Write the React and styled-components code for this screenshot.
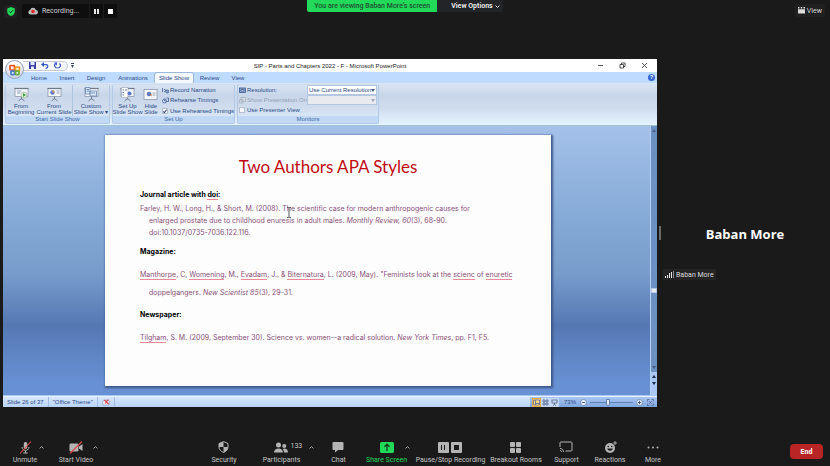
import React from "react";
import styled, { createGlobalStyle, css } from "styled-components";

const UI = `Roboto, "Noto Sans", sans-serif`;

const GlobalStyle = createGlobalStyle`
  *, *::before, *::after { box-sizing: border-box; }
  body { margin: 0; background: #1a1a1a; font-family: ${UI}; }
  button, input, select { font: inherit; color: inherit; margin: 0; }
  button { padding: 0; border: 0; background: none; white-space: nowrap; cursor: pointer; }
  svg { display: block; flex: none; }
  h1, h2, p { margin: 0; }
`;

/* ---------- Meeting shell ---------- */

const Shell = styled.div`
  display: flex;
  flex-direction: column;
  min-height: 100vh;
  color: #d6d6d6;
`;

const TopBar = styled.header`
  display: grid;
  grid-template-columns: 1fr auto 1fr;
  align-items: start;
  height: 59px;
  font-size: 7px;
`;

const RecordingArea = styled.div`
  display: flex;
  align-items: center;
  gap: 5px;
  padding: 4px 0 0 4px;
`;

const ShieldButton = styled.button`
  display: grid;
  place-items: center;
  width: 13px;
  height: 13px;
  border-radius: 3px;
  background: #222;
`;

const RecordingPill = styled.div`
  display: flex;
  align-items: center;
  height: 14px;
  padding-left: 6px;
  border-radius: 2px;
  background: #0e0e0e;
  color: #d0d0d0;
`;

const RecordingLabel = styled.span`
  width: 51px;
  padding-left: 4px;
`;

const PillButton = styled.button`
  display: grid;
  place-items: center;
  width: 14px;
  height: 14px;
  border-left: 1px solid #1c1c1c;
`;

const SharingBanner = styled.div`
  display: flex;
  height: 12px;
  margin-right: 20px;
  line-height: 12px;
  font-size: 7px;
  border-radius: 0 0 2px 2px;
  overflow: hidden;
`;

const SharingText = styled.span`
  padding: 0 7px;
  background: #23d959;
  color: #1d5231;
  font-weight: 500;
  white-space: nowrap;
`;

const ViewOptions = styled.button`
  display: flex;
  align-items: center;
  gap: 2px;
  padding: 0 3px 0 14px;
  background: #222427;
  color: #f2f2f2;
  font-weight: 600;
`;

const ViewButton = styled.button`
  display: flex;
  align-items: center;
  justify-self: end;
  gap: 2px;
  height: 13px;
  margin: 4px 5px 0 0;
  padding: 0 3px;
  border-radius: 3px;
  background: #202020;
`;

const Stage = styled.main`
  flex: 1;
  display: grid;
  grid-template-columns: minmax(0, 1fr) 173px;
  padding-left: 3px;
`;

const ParticipantPanel = styled.aside`
  position: relative;
  display: flex;
  flex-direction: column;
  justify-content: center;
  align-items: center;
  padding-top: 38px;
`;

const PanelName = styled.h2`
  color: #fff;
  font-family: "Open Sans", sans-serif;
  font-size: 13px;
  line-height: 20px;
  font-weight: 700;
  padding-left: 3px;
`;

const PanelTag = styled.div`
  display: flex;
  align-items: center;
  align-self: flex-start;
  gap: 2px;
  height: 11px;
  margin: 25px 0 0 6px;
  padding: 0 2px;
  background: #242424;
  color: #dcdcdc;
  font-size: 7px;
`;

const ResizeHandle = styled.div`
  position: absolute;
  left: 2px;
  top: 167px;
  width: 2px;
  height: 14px;
  background: #6c6c6c;
`;

/* ---------- Meeting toolbar ---------- */

const Toolbar = styled.footer`
  display: flex;
  justify-content: space-between;
  align-items: flex-end;
  height: 59px;
  font-size: 7px;
  line-height: 10px;
`;

const ToolSet = styled.div`
  display: flex;
  padding-left: ${(p) => p.$inset || 0}px;
`;

const ToolCell = styled.div`
  position: relative;
  display: flex;
  justify-content: center;
  width: ${(p) => p.$w}px;
  height: 27px;
`;

const ToolButton = styled.button`
  display: flex;
  flex-direction: column;
  align-items: center;
  color: ${(p) => (p.$accent ? "#23d959" : "#c4c4c4")};
`;

const ToolIcon = styled.span`
  display: flex;
  align-items: center;
  gap: 2px;
  height: 16px;
  color: #b4b4b4;
`;

const ToolCount = styled.span`
  position: absolute;
  left: calc(50% + 9px);
  top: 2px;
  color: #c4c4c4;
`;

const CaretButton = styled.button`
  position: absolute;
  right: 4px;
  top: 4px;
  width: 8px;
  height: 8px;
  display: grid;
  place-items: center;
  color: #b4b4b4;
`;

const EndArea = styled.div`
  display: flex;
  justify-content: flex-end;
  width: 56px;
  padding: 0 7px 7px 0;
`;

const EndButton = styled.button`
  width: 33px;
  height: 15px;
  border-radius: 4px;
  background: #b92525;
  color: #fff;
  font-weight: 700;
`;

/* ---------- Presentation window ---------- */

const Window = styled.section`
  position: relative;
  display: flex;
  flex-direction: column;
  min-width: 0;
  color: #2b4a86;
  background: #bfdbff;
  font-family: "Liberation Sans", Arial, sans-serif;
  font-size: 6px;
  line-height: 8px;
`;

const TitleBar = styled.div`
  display: grid;
  grid-template-columns: 1fr auto 1fr;
  align-items: center;
  height: 13px;
  background: #fff;
  color: #222;
`;

const QuickAccess = styled.div`
  display: flex;
  align-items: center;
  gap: 3px;
  padding-left: 20px;
`;

const QuickPill = styled.div`
  display: flex;
  align-items: center;
  gap: 5px;
  height: 10px;
  width: 45px;
  padding-left: 6px;
  border: 1px solid #c3c9d8;
  border-left: 0;
  border-radius: 0 5px 5px 0;
  background: #f5f8fd;
`;

const WindowControls = styled.div`
  display: flex;
  justify-content: flex-end;
  gap: 15px;
  padding-right: 9px;
  color: #222;
`;

const OfficeButton = styled.button`
  position: absolute;
  left: 2px;
  top: 1px;
  width: 19px;
  height: 19px;
  display: grid;
  place-items: center;
  border-radius: 50%;
  border: 1px solid #93a0b8;
  background: radial-gradient(circle at 50% 30%, #fff 0 30%, #cdd5e4 75%, #eef3fb);
`;

const TabStrip = styled.nav`
  display: flex;
  align-items: flex-end;
  height: 11px;
  padding-left: 22px;
  background: #bfdbff;
`;

const Tab = styled.button`
  width: ${(p) => p.$w}px;
  height: 10px;
  border-radius: 2px 2px 0 0;
  ${(p) =>
    p.$active &&
    css`
      background: #f3f8ff;
      box-shadow: 0 0 0 1px #9db8de;
      clip-path: inset(-1px -1px 0 -1px);
    `}
`;

const HelpIcon = styled.button`
  margin: 0 2px 2px auto;
  width: 7px;
  height: 7px;
  border-radius: 50%;
  background: #3566cf;
  color: #fff;
  font-size: 6px;
  line-height: 7px;
  font-weight: 700;
`;

const Ribbon = styled.div`
  display: flex;
  gap: 2px;
  height: 43px;
  padding: 1px 2px;
  border-bottom: 1px solid #9fc4cf;
  background: linear-gradient(#dbe6f4 0, #c8d6ea 28%, #cfdcee 60%, #e5f3fe 100%);
`;

const Group = styled.div`
  display: flex;
  flex-direction: column;
  width: ${(p) => p.$w}px;
  border: 1px solid #b3cae6;
  border-top-color: #cfdcec;
  border-radius: 2px;
`;

const GroupBody = styled.div`
  flex: 1;
  display: flex;
`;

const GroupLabel = styled.div`
  height: 7px;
  line-height: 7px;
  text-align: center;
  background: #c1d9f4;
  color: #3e6aaa;
`;

const BigButton = styled.button`
  display: flex;
  flex-direction: column;
  align-items: center;
  width: ${(p) => p.$w}px;
  line-height: 6px;
  padding-top: 2px;
  ${(p) => p.$divided && css`border-left: 1px solid #b0c3de;`}
`;

const BigLabel = styled.span`
  margin-top: 1px;
`;

const OptionColumn = styled.div`
  display: flex;
  flex-direction: column;
  justify-content: space-around;
  padding-left: 2px;
`;

const Option = styled.button`
  display: flex;
  align-items: center;
  gap: 1px;
  height: 8px;
`;

const CheckOption = styled.label`
  display: flex;
  align-items: center;
  gap: 2px;
  height: 8px;
  white-space: nowrap;
`;

const Check = styled.input`
  appearance: none;
  width: 6px;
  height: 6px;
  border: 1px solid #b5bfce;
  background: #f6f6f6;
  display: grid;
  place-items: center;
  &:checked::after {
    content: "";
    width: 2px;
    height: 4px;
    border: solid #33467a;
    border-width: 0 1px 1px 0;
    transform: rotate(40deg);
  }
`;

const MonitorForm = styled.div`
  flex: 1;
  display: grid;
  grid-template-columns: 68px 70px;
  grid-auto-rows: 10px;
  align-items: center;
  padding-left: 1px;
`;

const FieldLabel = styled.label`
  display: flex;
  align-items: center;
  gap: 1px;
  white-space: nowrap;
  color: ${(p) => (p.$dim ? "#93a1b8" : "inherit")};
`;

const SelectWrap = styled.div`
  position: relative;
  svg { position: absolute; right: 2px; top: 4px; pointer-events: none; }
`;

const Select = styled.select`
  appearance: none;
  display: block;
  width: 100%;
  height: 10px;
  padding: 0 1px;
  border: 1px solid #b3c7e1;
  border-radius: 0;
  background: ${(p) => (p.disabled ? "#e9eaf0" : "#fdfeff")};
  opacity: 1;
`;

const Workspace = styled.div`
  flex: 1;
  display: flex;
  padding-left: 2px;
  background: linear-gradient(#a5c1ea, #8fb2dd 22%, #779ccb 55%, #5578b3 74%, #6891d3 96%);
  border-bottom: 1px solid #a9c8f3;
`;

const Canvas = styled.div`
  flex: 1;
  display: flex;
  padding: 9px 99px 9px 100px;
`;

const Slide = styled.article`
  position: relative;
  flex: 1;
  padding: 20px 0 0 35px;
  background: #fdfdfe;
  box-shadow: 1px 1px 2px 1px #3d5787;
  color: #8b5078;
  font-family: Inter, "Liberation Sans", sans-serif;
  font-size: 7px;
  line-height: 12px;
  white-space: nowrap;
`;

const SlideTitle = styled.h1`
  margin-right: 35px;
  padding-bottom: 10px;
  color: #c00b12;
  font-family: Lato, sans-serif;
  font-size: 17px;
  line-height: 24px;
  font-weight: 400;
  text-align: center;
`;

const Heading = styled.h2`
  color: #000;
  font-size: 7px;
  line-height: 12px;
  font-weight: 700;
`;

const Citation = styled.p`
  padding-left: 9px;
  text-indent: -9px;
  line-height: ${(p) => (p.$loose ? 18 : 12)}px;
  margin: ${(p) => (p.$loose ? "8px 0 7px" : "2px 0 7px")};
`;

const Misspelt = styled.span`
  border-bottom: 1px solid #ea8799;
`;

const Pointer = styled.svg`
  position: absolute;
  left: 181px;
  top: 72px;
`;

const ScrollTrack = styled.div`
  display: flex;
  flex-direction: column;
  align-items: center;
  width: 7px;
  border-left: 1px solid #b5d0f6;
  background: #6d90c2;
`;

const ScrollThumb = styled.div`
  width: 6px;
  height: 5px;
  margin: 153px 0 auto;
  background: #e6edf7;
  border: 1px solid #b6c6de;
`;

const ScrollEnd = styled.div`
  display: flex;
  flex-direction: column;
  align-items: center;
  gap: 4px;
  width: 6px;
  padding: ${(p) => (p.$pages ? "3px 0 10px" : "3px 0")};
  background: ${(p) => (p.$pages ? "#a9c7f2" : "none")};
`;

const StatusBar = styled.div`
  display: flex;
  align-items: stretch;
  height: 11px;
  line-height: 10px;
  border-top: 1px solid #e8f2ff;
  background: linear-gradient(#d8e7fc, #b9d3f8);
`;

const StatusItem = styled.span`
  display: flex;
  align-items: center;
  padding: 0 4px;
  border-right: 1px solid #9fbbe2;
`;

const ZoomArea = styled.div`
  display: flex;
  align-items: center;
  gap: 3px;
  width: 127px;
  margin-left: auto;
  padding: 0 3px 0 2px;
  background: linear-gradient(#a9c6f2, #7ea6e0);
`;

const ViewMode = styled.button`
  display: grid;
  place-items: center;
  width: 9px;
  height: 9px;
  margin-right: -3px;
  background: ${(p) => (p.$on ? "#ffd987" : "#c5d8f4")};
  border: 1px solid ${(p) => (p.$on ? "#e3a94a" : "#c5d8f4")};
`;

const ZoomValue = styled.span`
  margin: 0 1px 0 5px;
`;

const ZoomSlider = styled.input`
  appearance: none;
  flex: 1;
  min-width: 0;
  height: 8px;
  background: linear-gradient(#5f7fb4, #5f7fb4) center / 100% 1px no-repeat;
  &::-webkit-slider-thumb {
    appearance: none;
    width: 4px;
    height: 7px;
    border: 1px solid #5f7fb4;
    border-radius: 0 0 2px 2px;
    background: #e8f0fb;
  }
`;

const FitButton = styled.button`
  margin-left: 1px;
`;

/* ---------- Icons ---------- */

const Caret = ({ down, color = "currentColor", size = 5 }) => (
  <svg width={size} height={size} viewBox="0 0 8 8" fill="none" stroke={color} strokeWidth="1.5">
    <path d={down ? "M1 2.5 4 5.5 7 2.5" : "M1 5.5 4 2.5 7 5.5"} />
  </svg>
);

const Triangle = ({ up, color = "#4a5f88" }) => (
  <svg width="4" height="3" viewBox="0 0 4 3"><path fill={color} d={up ? "M0 3h4L2 0z" : "M0 0h4L2 3z"} /></svg>
);

const CustomizeMark = () => (
  <svg width="3" height="5" viewBox="0 0 3 5" fill="#3a4560"><path d="M0 0h3v1H0zM0 2h3L1.500 5z" /></svg>
);

const ShieldCheck = () => (
  <svg width="8" height="9" viewBox="0 0 16 18">
    <path fill="#23d959" d="M8 0 15.500 3v6c0 4.500-3 7.500-7.500 9C3.500 16.500.5 13.500.5 9V3z" />
    <path d="m4.500 8.800 2.700 2.700 4.600-5" fill="none" stroke="#1a1a1a" strokeWidth="1.800" />
  </svg>
);

const CloudRecord = () => (
  <svg width="10" height="8" viewBox="0 0 20 16">
    <path fill="#b9b9b9" d="M5 15a4.500 4.500 0 0 1-.8-8.900A6 6 0 0 1 15.800 6 4.500 4.500 0 0 1 15 15z" />
    <circle cx="10" cy="9" r="3.600" fill="#e02828" />
  </svg>
);

const Pause = () => (
  <svg width="5" height="5" viewBox="0 0 5 5" fill="#e8e8e8"><path d="M0 0h2v5H0zM3 0h2v5H3z" /></svg>
);
const Stop = () => <svg width="5" height="5"><path fill="#fff" d="M0 0h5v5H0z" /></svg>;

const GridIcon = () => (
  <svg width="7" height="7" viewBox="0 0 14 14" fill="#ddd">
    <path d="M0 0h3v3H0zM5.500 0h3v3h-3zM11 0h3v3h-3zM0 4.500h14V13H0z" />
  </svg>
);

const Signal = () => (
  <svg width="9" height="7" viewBox="0 0 9 7" fill="#e8e8e8">
    <path d="M0 5h1v2H0zM2 4h1v3H2zM4 2h1v5H4zM6 1h1v6H6z" /><path fill="#8a8a8a" d="M8 0h1v7H8z" />
  </svg>
);

const MicOff = () => (
  <svg width="13" height="13" viewBox="0 0 26 26" fill="none" stroke="currentColor" strokeWidth="2">
    <rect x="9.500" y="2" width="7" height="14" rx="3.500" fill="currentColor" stroke="none" />
    <path d="M6 12c0 9 14 9 14 0M13 19v5M8.500 24h9" />
    <path d="M2 25 24 1" stroke="#e04a4a" strokeWidth="2.200" />
  </svg>
);

const VideoOff = () => (
  <svg width="14" height="13" viewBox="0 0 28 26">
    <rect x="1" y="5" width="18" height="16" rx="2.500" fill="currentColor" />
    <path fill="currentColor" d="m20 11 7-5v14l-7-5z" />
    <path d="M2 25 26 1" stroke="#e04a4a" strokeWidth="2.200" />
  </svg>
);

const Security = () => (
  <svg width="11" height="12" viewBox="0 0 22 24">
    <path d="M11 1.200 20 5v7c0 5-3.500 8.800-9 11-5.500-2.200-9-6-9-11V5z" fill="#1a1a1a" stroke="currentColor" strokeWidth="2" />
    <path fill="currentColor" d="M11 1.200V12H2V5zM11 12h9c0 5-3.500 8.800-9 11z" />
  </svg>
);

const People = () => (
  <svg width="14" height="11" viewBox="0 0 28 22" fill="currentColor">
    <circle cx="9" cy="6" r="5" /><path d="M0 21c0-11 18-11 18 0z" />
    <circle cx="20.500" cy="8" r="4" /><path d="M20 21c0-3-1-5.300-2.600-6.700C21.500 11.500 28 13.500 28 21z" />
  </svg>
);

const Chat = () => (
  <svg width="12" height="12" viewBox="0 0 24 24" fill="currentColor">
    <path d="M3 2h18a2 2 0 0 1 2 2v12a2 2 0 0 1-2 2h-9l-6 5v-5H3a2 2 0 0 1-2-2V4a2 2 0 0 1 2-2z" />
  </svg>
);

const Share = () => (
  <svg width="14" height="11" viewBox="0 0 28 22">
    <rect width="28" height="22" rx="3" fill="#23d959" />
    <path d="M14 18V5M9 9.500 14 4.500l5 5" fill="none" stroke="#12401f" strokeWidth="2.600" />
  </svg>
);

const PauseSquare = () => (
  <svg width="11" height="11" viewBox="0 0 11 11"><rect width="11" height="11" rx="1" fill="currentColor" /><path fill="#1a1a1a" d="M3 3h1v5H3zM6 3h1v5H6z" /></svg>
);
const StopSquare = () => (
  <svg width="11" height="11" viewBox="0 0 11 11"><rect width="11" height="11" rx="1" fill="currentColor" /><path fill="#1a1a1a" d="M3 3h5v5H3z" /></svg>
);
const Rooms = () => (
  <svg width="11" height="11" viewBox="0 0 11 11" fill="currentColor">
    <rect width="5" height="5" rx="1" /><rect x="6" width="5" height="5" rx="1" /><rect y="6" width="5" height="5" rx="1" /><rect x="6" y="6" width="5" height="5" rx="1" />
  </svg>
);
const Cast = () => (
  <svg width="14" height="12" viewBox="0 0 28 24" fill="none" stroke="currentColor" strokeWidth="2">
    <path d="M2 12V4a2 2 0 0 1 2-2h20a2 2 0 0 1 2 2v14a2 2 0 0 1-2 2H13M2 15c4 0 7 3 7 7M2 19c2 0 3 1 3 3" />
  </svg>
);
const Smile = () => (
  <svg width="13" height="13" viewBox="0 0 26 26">
    <circle cx="12" cy="14" r="10" fill="currentColor" />
    <circle cx="8.500" cy="11" r="1.500" fill="#1a1a1a" /><circle cx="15.500" cy="11" r="1.500" fill="#1a1a1a" />
    <path d="M6.500 15h11c-1 6-10 6-11 0z" fill="#1a1a1a" />
    <path d="M22 0v8M18 4h8" stroke="#1a1a1a" strokeWidth="4" /><path d="M22 0v8M18 4h8" stroke="currentColor" strokeWidth="1.800" />
  </svg>
);
const Dots = () => (
  <svg width="12" height="3" viewBox="0 0 12 3" fill="currentColor"><circle cx="1.500" cy="1.500" r="1" /><circle cx="6" cy="1.500" r="1" /><circle cx="10.500" cy="1.500" r="1" /></svg>
);

const Screen = ({ kind }) => (
  <svg width="15" height="15" viewBox="0 0 30 30">
    {kind !== "hide" && <path d="M15 18v7M9 28l6-5 6 5" fill="none" stroke="#75808f" strokeWidth="2" />}
    <rect x="2" y={kind === "hide" ? 5 : 3} width="26" height={kind === "hide" ? 20 : 16} fill="#f3f6fa" stroke="#8994a5" strokeWidth="1.500" />
    {kind !== "hide" && <path d="M1 3h28" stroke="#6e7a8c" strokeWidth="2.500" />}
    {kind === "play" && <><path d="M6 8h9M6 12h7" stroke="#8fa3c4" strokeWidth="2" /><circle cx="20" cy="16" r="6" fill="#e3f3df" stroke="#7b9b7b" /><path d="m18 12 6 4-6 4z" fill="#3d9a3d" /></>}
    {kind === "current" && <><circle cx="11" cy="11" r="4.500" fill="#5a78c8" /><path d="M11 11V6.500a4.500 4.500 0 0 1 4.500 4.500z" fill="#e8a24a" /><path d="M19 8h6M19 12h6" stroke="#8fa3c4" strokeWidth="2" /></>}
    {kind === "custom" && <><path d="M3 1h9v13H3zM12 8h13v10H12z" fill="#dce8f8" stroke="#5f7eac" strokeWidth="1.500" /><path d="M5 5h5M5 8h5M14 12h8" stroke="#4a75b8" strokeWidth="1.500" /></>}
    {kind === "setup" && <><path d="M3 1h13v20H3z" fill="#fff" stroke="#8c96a6" /><path d="M5 6h3M5 11h3M5 16h3M10 6h4" stroke="#5b7cb5" strokeWidth="2" /><circle cx="19" cy="13" r="4" fill="#5a78c8" /></>}
    {kind === "hide" && <><circle cx="12" cy="14" r="4.500" fill="#5a78c8" /><path d="M12 14h5v5z" fill="#d96a4a" /><path d="M19 12h6M19 16h6" stroke="#98a7bd" strokeWidth="2" /></>}
  </svg>
);

const Mini = ({ kind }) => (
  <svg width="7" height="7" viewBox="0 0 14 14" fill="none" stroke="#3d5a96" strokeWidth="1.600">
    {kind === "narrate" && <><path d="M1 2v8M4 4l4 3-4 3" /><circle cx="10.500" cy="9" r="3" fill="#8da6d0" /></>}
    {kind === "clock" && <><circle cx="5" cy="8" r="4" fill="#dfe9f8" /><path d="M5 5v3h3M9 2h4v7H9" /></>}
    {kind === "monitor" && <><rect x="1" y="2" width="12" height="9" fill="#8fa5c7" /><path d="M4 5h6v3H4z" fill="#fff" /></>}
    {kind === "show" && <g stroke="#a3aec0"><path d="M4 1h9v8H4zM1 5h7v7H1z" fill="#d7dde8" /></g>}
  </svg>
);

const Save = () => (
  <svg width="7" height="7" viewBox="0 0 14 14"><path fill="#3a3fa8" d="M0 0h14v14H0z" /><path fill="#e6ebff" d="M3 0h8v6H3zM4 9h6v5H4z" /></svg>
);
const Undo = () => (
  <svg width="8" height="7" viewBox="0 0 16 14"><path d="M4 5h6c5 0 5 7-1 8" fill="none" stroke="#3454c4" strokeWidth="2.500" /><path fill="#3454c4" d="M0 5 6 0v10z" /></svg>
);
const Redo = () => (
  <svg width="7" height="7" viewBox="0 0 14 14"><path d="M3 3c-4 4-1 9 4 9s8-5 4-9" fill="none" stroke="#3454c4" strokeWidth="2.400" /><path fill="#3454c4" d="M0 1h6v6z" /></svg>
);
const OfficeLogo = () => (
  <svg width="12" height="12" viewBox="0 0 24 24" fill="none" strokeWidth="3.500">
    <rect x="2" y="3" width="9" height="9" rx="1" stroke="#e2562a" /><rect x="13" y="6" width="8" height="7" rx="1" stroke="#f0a020" />
    <rect x="4" y="14" width="7" height="7" rx="1" stroke="#4b7fd0" /><rect x="13" y="14" width="7" height="7" rx="1" stroke="#6fae3d" />
  </svg>
);
const WindowGlyph = ({ d }) => (
  <svg width="7" height="7" viewBox="0 0 14 14" fill="none" stroke="currentColor" strokeWidth="1.500"><path d={d} /></svg>
);
const SpellCheck = () => (
  <svg width="8" height="8" viewBox="0 0 16 16"><path d="M1 6 8 4l7 2-1 8H2z" fill="#f2f5ff" stroke="#6878a8" /><path d="m5 4 8 8M13 3 6 11" stroke="#dc3c3c" strokeWidth="2.200" /></svg>
);
const ViewGlyph = ({ d }) => (
  <svg width="7" height="7" viewBox="0 0 14 14" fill="none" stroke="#54618a" strokeWidth="1.500"><path d={d} /></svg>
);
const ZoomKnob = ({ plus }) => (
  <svg width="7" height="7" viewBox="0 0 14 14"><circle cx="7" cy="7" r="6" fill="#eaf1fc" stroke="#5d7396" strokeWidth="1.300" /><path d={plus ? "M3.500 7h7M7 3.500v7" : "M3.500 7h7"} stroke="#3c5077" strokeWidth="1.800" /></svg>
);

/* ---------- Composition ---------- */

function Tool({ label, icon, w, caret, count, accent }) {
  return (
    <ToolCell $w={w}>
      <ToolButton $accent={accent}>
        <ToolIcon>{icon}</ToolIcon>
        {label}
      </ToolButton>
      {count && <ToolCount>{count}</ToolCount>}
      {caret && <CaretButton aria-label={`${label} options`}><Caret /></CaretButton>}
    </ToolCell>
  );
}

const tabs = [["Home", 28], ["Insert", 28], ["Design", 30], ["Animations", 44], ["Slide Show", 38], ["Review", 33], ["View", 24]];

function Big({ kind, w, lines, divided, menu }) {
  return (
    <BigButton $w={w} $divided={divided}>
      <Screen kind={kind} />
      <BigLabel>{lines[0]}<br />{lines[1]}{menu && " ▾"}</BigLabel>
    </BigButton>
  );
}

function PresentationWindow() {
  return (
    <Window>
      <TitleBar>
        <QuickAccess>
          <QuickPill><Save /><Undo /><Redo /></QuickPill>
          <CustomizeMark />
        </QuickAccess>
        <span>SIP - Parts and Chapters 2022 - F - Microsoft PowerPoint</span>
        <WindowControls>
          <button aria-label="Minimize"><WindowGlyph d="M2 7h10" /></button>
          <button aria-label="Restore"><WindowGlyph d="M2 5h7v7H2zM5 5V2h7v7H9" /></button>
          <button aria-label="Close"><WindowGlyph d="m2 2 10 10M12 2 2 12" /></button>
        </WindowControls>
      </TitleBar>
      <TabStrip>
        {tabs.map(([name, w]) => <Tab key={name} $w={w} $active={name === "Slide Show"}>{name}</Tab>)}
        <HelpIcon>?</HelpIcon>
      </TabStrip>
      <OfficeButton aria-label="Office menu"><OfficeLogo /></OfficeButton>

      <Ribbon>
        <Group $w={105}>
          <GroupBody>
            <Big kind="play" w={30} lines={["From", "Beginning"]} />
            <Big kind="current" w={36} lines={["From", "Current Slide"]} />
            <Big kind="custom" w={37} lines={["Custom", "Slide Show"]} divided menu />
          </GroupBody>
          <GroupLabel>Start Slide Show</GroupLabel>
        </Group>
        <Group $w={123}>
          <GroupBody>
            <Big kind="setup" w={29} lines={["Set Up", "Slide Show"]} />
            <Big kind="hide" w={20} lines={["Hide", "Slide"]} />
            <OptionColumn>
              <Option><Mini kind="narrate" />Record Narration</Option>
              <Option><Mini kind="clock" />Rehearse Timings</Option>
              <CheckOption><Check type="checkbox" defaultChecked />Use Rehearsed Timings</CheckOption>
            </OptionColumn>
          </GroupBody>
          <GroupLabel>Set Up</GroupLabel>
        </Group>
        <Group $w={142}>
          <MonitorForm>
            <FieldLabel htmlFor="resolution"><Mini kind="monitor" />Resolution:</FieldLabel>
            <SelectWrap>
              <Select id="resolution"><option>Use Current Resolution</option></Select>
              <Triangle />
            </SelectWrap>
            <FieldLabel htmlFor="monitor" $dim><Mini kind="show" />Show Presentation On:</FieldLabel>
            <SelectWrap>
              <Select id="monitor" disabled />
              <Triangle color="#9aa5b8" />
            </SelectWrap>
            <CheckOption><Check type="checkbox" />Use Presenter View</CheckOption>
          </MonitorForm>
          <GroupLabel>Monitors</GroupLabel>
        </Group>
      </Ribbon>

      <Workspace>
        <Canvas>
          <Slide>
            <SlideTitle>Two Authors APA Styles</SlideTitle>
            <Heading>Journal article with <Misspelt>doi</Misspelt>:</Heading>
            <Citation>
              Farley, H. W., Long, H., &amp; Short, M. (2008). The scientific case for modern anthropogenic causes for<br />
              enlarged prostate due to childhood enuresis in adult males. <i>Monthly Review, 60</i>(3), 68-90.<br />
              doi:10.1037/0735-7036.122.116.
            </Citation>
            <Heading>Magazine:</Heading>
            <Citation $loose>
              <Misspelt>Manthorpe</Misspelt>, C, <Misspelt>Womening</Misspelt>, M., <Misspelt>Evadam</Misspelt>, J., &amp; <Misspelt>Biternatura</Misspelt>, L. (2009, May). "Feminists look at the <Misspelt>scienc</Misspelt> of <Misspelt>enuretic</Misspelt><br />
              doppelgangers. <i>New Scientist 85</i>(3), 29-31.
            </Citation>
            <Heading>Newspaper:</Heading>
            <Citation $loose>
              <Misspelt>Tilgham</Misspelt>, S. M. (2009, September 30). Science vs. women--a radical solution. <i>New York Times</i>, pp. F1, F5.
            </Citation>
            <Pointer width="6" height="11" viewBox="0 0 6 11" fill="none" stroke="#555">
              <path d="M1 .5h1.500l.5.500.5-.5H5M3 1v9M1 10.500h1.500L3 10l.5.500H5" />
            </Pointer>
          </Slide>
        </Canvas>
        <ScrollTrack>
          <ScrollEnd><Triangle up /></ScrollEnd>
          <ScrollThumb />
          <ScrollEnd><Triangle /></ScrollEnd>
          <ScrollEnd $pages><Triangle up color="#1d2b4d" /><Triangle color="#1d2b4d" /></ScrollEnd>
        </ScrollTrack>
      </Workspace>

      <StatusBar>
        <StatusItem>Slide 26 of 37</StatusItem>
        <StatusItem>"Office Theme"</StatusItem>
        <StatusItem><SpellCheck /></StatusItem>
        <ZoomArea>
          <ViewMode $on aria-label="Normal"><ViewGlyph d="M1 2h12v10H1zM5 2v10M5 9h8" /></ViewMode>
          <ViewMode aria-label="Slide sorter"><ViewGlyph d="M2 2h4v4H2zM8 2h4v4H8zM2 8h4v4H2zM8 8h4v4H8z" /></ViewMode>
          <ViewMode aria-label="Slide show"><ViewGlyph d="M1 2h12M2 2v6h10V2M7 8v3M4 13l3-2 3 2" /></ViewMode>
          <ZoomValue>73%</ZoomValue>
          <button aria-label="Zoom out"><ZoomKnob /></button>
          <ZoomSlider type="range" aria-label="Zoom" defaultValue={40} />
          <button aria-label="Zoom in"><ZoomKnob plus /></button>
          <FitButton aria-label="Fit to window"><ViewGlyph d="M1 5V1h4M9 1h4v4M13 9v4H9M5 13H1V9M4 4l6 6M10 4l-6 6" /></FitButton>
        </ZoomArea>
      </StatusBar>
    </Window>
  );
}

export default function App() {
  return (
    <Shell>
      <GlobalStyle />
      <TopBar>
        <RecordingArea>
          <ShieldButton aria-label="Meeting information"><ShieldCheck /></ShieldButton>
          <RecordingPill>
            <CloudRecord />
            <RecordingLabel>Recording...</RecordingLabel>
            <PillButton aria-label="Pause recording"><Pause /></PillButton>
            <PillButton aria-label="Stop recording"><Stop /></PillButton>
          </RecordingPill>
        </RecordingArea>
        <SharingBanner>
          <SharingText>You are viewing Baban More's screen</SharingText>
          <ViewOptions>View Options <Caret down /></ViewOptions>
        </SharingBanner>
        <ViewButton><GridIcon />View</ViewButton>
      </TopBar>

      <Stage>
        <PresentationWindow />
        <ParticipantPanel>
          <ResizeHandle />
          <PanelName>Baban More</PanelName>
          <PanelTag><Signal />Baban More</PanelTag>
        </ParticipantPanel>
      </Stage>

      <Toolbar>
        <ToolSet $inset={1}>
          <Tool label="Unmute" icon={<MicOff />} w={48} caret />
          <Tool label="Start Video" icon={<VideoOff />} w={54} caret />
        </ToolSet>
        <ToolSet>
          <Tool label="Security" icon={<Security />} w={40} />
          <Tool label="Participants" icon={<People />} w={75} count="133" caret />
          <Tool label="Chat" icon={<Chat />} w={39} />
          <Tool label="Share Screen" icon={<Share />} w={57} caret accent />
          <Tool label="Pause/Stop Recording" icon={<><PauseSquare /><StopSquare /></>} w={71} />
          <Tool label="Breakout Rooms" icon={<Rooms />} w={60} />
          <Tool label="Support" icon={<Cast />} w={41} />
          <Tool label="Reactions" icon={<Smile />} w={46} />
          <Tool label="More" icon={<Dots />} w={40} />
        </ToolSet>
        <EndArea><EndButton>End</EndButton></EndArea>
      </Toolbar>
    </Shell>
  );
}
